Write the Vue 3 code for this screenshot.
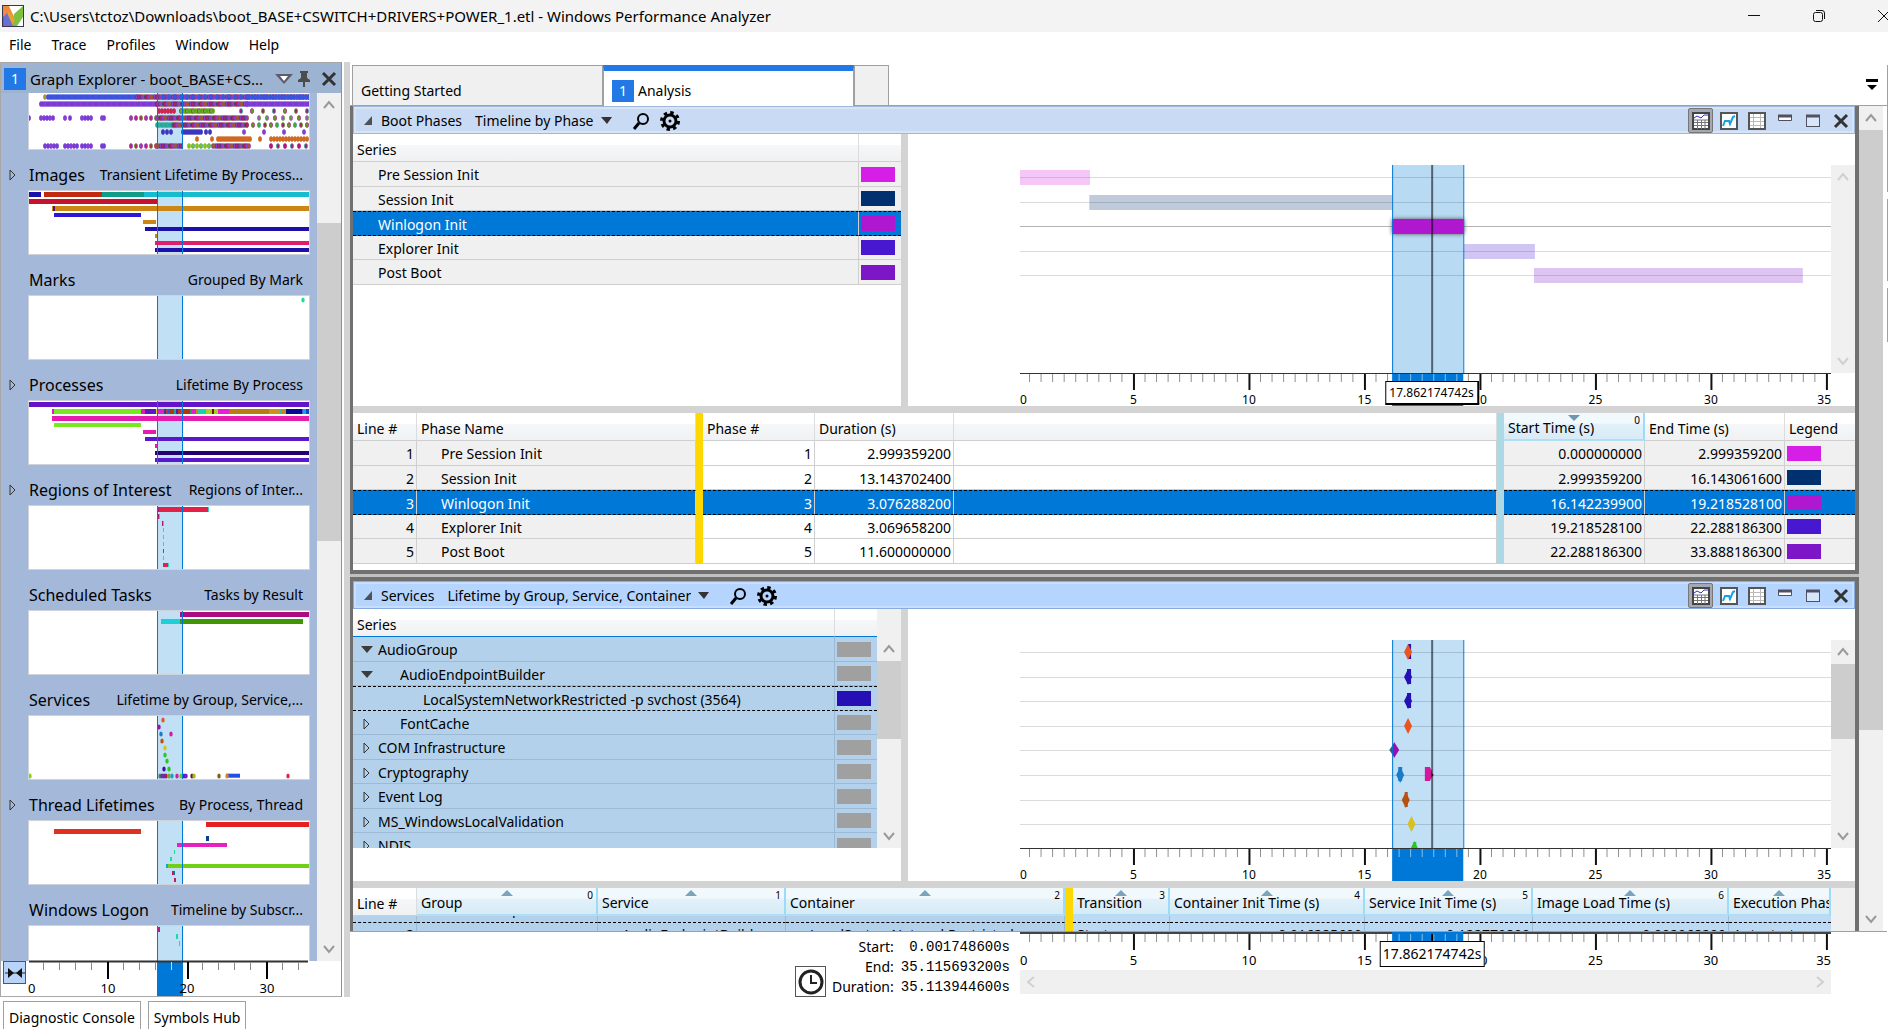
<script setup>
const SPAN = 35.11
const SEL = [16.11, 19.19]
const CURSOR = 17.84
const pct = (t) => (t / SPAN) * 100 + '%'

const ticks = []
for (let i = 1; i <= 70; i++) {
  const t = i / 2
  ticks.push({ x: pct(t - 0.11), major: i % 10 === 0, inside: t > SEL[0] && t < SEL[1] })
}
const labels = [0, 5, 10, 15, 20, 25, 30, 35].map((v) => ({
  v,
  x: v === 0 ? '0%' : v === 35 ? '100%' : pct(v - 0.09),
  anchor: v === 0 ? 'start' : v === 35 ? 'end' : 'middle'
}))

const menu = ['File', 'Trace', 'Profiles', 'Window', 'Help']

const phases = [
  { n: 1, name: 'Pre Session Init', from: 0, to: 3.03, dur: '2.999359200', start: '0.000000000', end: '2.999359200', color: '#d61fe6' },
  { n: 2, name: 'Session Init', from: 3, to: 16.11, dur: '13.143702400', start: '2.999359200', end: '16.143061600', color: '#00306e' },
  { n: 3, name: 'Winlogon Init', from: 16.11, to: 19.22, dur: '3.076288200', start: '16.142239900', end: '19.218528100', color: '#b018d0', sel: true },
  { n: 4, name: 'Explorer Init', from: 19.22, to: 22.29, dur: '3.069658200', start: '19.218528100', end: '22.288186300', color: '#4818d0' },
  { n: 5, name: 'Post Boot', from: 22.25, to: 33.89, dur: '11.600000000', start: '22.288186300', end: '33.888186300', color: '#7d16c6' }
]

const services = [
  { name: 'AudioGroup', level: 0, open: true, color: '#a0a0a0' },
  { name: 'AudioEndpointBuilder', level: 1, open: true, color: '#a0a0a0' },
  { name: 'LocalSystemNetworkRestricted -p svchost (3564)', level: 2, focus: true, leaf: true, color: '#260fb5' },
  { name: 'FontCache', level: 1, color: '#a0a0a0' },
  { name: 'COM Infrastructure', level: 0, color: '#a0a0a0' },
  { name: 'Cryptography', level: 0, color: '#a0a0a0' },
  { name: 'Event Log', level: 0, color: '#a0a0a0' },
  { name: 'MS_WindowsLocalValidation', level: 0, color: '#a0a0a0' },
  { name: 'NDIS', level: 0, color: '#a0a0a0' }
]

const lineY = (i) => 12 + Math.round(i * 24.6)
const diamond = 'M-4 0 L0 -8 L4 0 L0 8 Z'
const marks = [
  { t: 16.8, row: 0, parts: [['M0 -8 h3 v15 h-3 Z', '#260fb5'], [diamond, '#ea5420']] },
  { t: 16.8, row: 1, parts: [[diamond, '#260fb5'], ['M-1 -8 h4 v15 h-4 Z', '#260fb5']] },
  { t: 16.8, row: 2, parts: [[diamond, '#260fb5'], ['M-1 -8 h4 v15 h-4 Z', '#260fb5']] },
  { t: 16.8, row: 3, parts: [[diamond, '#ea5420']] },
  { t: 16.2, row: 4, parts: [['M-5 0 L0 -7 L0 7 Z', '#2c6e78'], ['M-3 0 L0 -8 L5 0 L0 8 L-3 0 Z', '#9412b0']] },
  { t: 16.46, row: 5, parts: [[diamond, '#1a7cc8'], ['M-2 -8 h4 v14 h-4 Z', '#1a7cc8']] },
  { t: 17.7, row: 5, parts: [['M0 -5 L5 0 L0 5 Z', '#7a0f60'], ['M-4 -8 h5 l2 4 v6 l-2 4 h-5 Z', '#d4189c']] },
  { t: 16.7, row: 6, parts: [[diamond, '#b85010'], ['M-1 -8 h3 v15 h-3 Z', '#b85010']] },
  { t: 16.95, row: 7, parts: [[diamond, '#d8c020']] },
  { t: 17.07, row: 8, parts: [[diamond, '#28c820'], ['M-1 -7 h3 v15 h-3 Z', '#28c820']] }
]

const panels = [
  { id: 'phases', title: 'Boot Phases', preset: 'Timeline by Phase', lines: 5 },
  { id: 'services', title: 'Services', preset: 'Lifetime by Group, Service, Container', lines: 8 }
]

const svcCols = [
  { name: 'Group', n: 0 }, { name: 'Service', n: 1 }, { name: 'Container', n: 2 },
  { gold: true },
  { name: 'Transition', n: 3 }, { name: 'Container Init Time (s)', n: 4 }, { name: 'Service Init Time (s)', n: 5 },
  { name: 'Image Load Time (s)', n: 6 }, { name: 'Execution Phase' }
]

// thumbnails: [row, x1, x2, colour] over a 280 unit wide plot
const barY = (r) => 1 + r * 7
const barH = (r) => (r < 3 ? 5 : 4)
const O = '#cc8614', N = '#1c10a8', M = '#e41cb0', V = '#5a18cc', G = '#78e820'
const cyan = '#28d8c0'
const imageBars = [
  [0, 0, 12, N], [0, 15, 73, '#c12a10'], [0, 73, 115, '#0f9d8a'], [0, 115, 280, '#17bdcf'],
  [1, 0, 128, '#c4122f'], [2, 23, 280, O], [2, 24, 26, '#581080'], [3, 25, 112, '#2a18d6'],
  [4, 114, 127, O], [5, 116, 280, N], [6, 126, 128, O], [7, 126, 280, '#e01f6c'], [8, 126, 280, N]
]
const processBars = [
  [0, 0, 280, '#6414c8'],
  [1, 23, 25, M], [1, 25, 112, G], [1, 112, 116, M], [1, 116, 127, V], [1, 127, 128, '#e8d020'], [1, 128, 135, '#e020d0'],
  [1, 135, 137, '#384080'], [1, 137, 139, '#c03040'], [1, 139, 141, '#2060c0'], [1, 141, 145, '#b03810'], [1, 145, 147, '#30a080'],
  [1, 147, 149, '#4028b0'], [1, 149, 152, '#c03020'], [1, 152, 154, '#e020d0'], [1, 154, 161, '#b03810'], [1, 161, 162, '#20a060'],
  [1, 162, 167, '#e020d0'], [1, 167, 169, O], [1, 169, 177, '#18d0b0'], [1, 177, 183, '#a8d018'], [1, 183, 185, '#701010'],
  [1, 185, 189, '#a8d018'], [1, 189, 200, '#e820d0'], [1, 200, 201, '#7070e0'], [1, 201, 240, '#b87c10'], [1, 240, 251, '#d09018'],
  [1, 251, 252, '#30c0b0'], [1, 252, 257, O], [1, 257, 273, '#080898'], [1, 273, 274, '#3858e8'], [1, 274, 277, '#18a0e8'], [1, 277, 280, '#1840d0'],
  [2, 23, 280, M], [3, 25, 112, G], [4, 114, 127, M], [5, 116, 280, V], [6, 126, 128, M], [7, 126, 280, '#240070'], [8, 126, 280, V]
]
const regionBars = [
  [0, 129, 179, '#e42048'], [0, 129, 130, '#b01880'], [0, 179, 180, cyan], [1, 129, 130, '#b01880'], [1, 130, 131, cyan],
  [2, 133, 134, '#b01860'], [2, 134, 135, cyan], [3, 134, 135, cyan], [4, 134, 135, cyan], [5, 134, 135, cyan],
  [6, 134, 135, '#e42048'], [7, 134, 135, cyan], [8, 134, 139, '#e42048'], [8, 139, 140, cyan]
]
const taskBars = [[0, 151, 280, '#a80c80'], [1, 132, 151, '#1cd0d8'], [1, 151, 274, '#409408']]
const threadBars = [
  [0, 177, 280, '#e42020'], [1, 25, 112, '#e03020'], [2, 177, 180, '#084090'], [3, 148, 198, '#e820c0'],
  [4, 145, 146, '#20e090'], [5, 141, 143, '#20e090'], [6, 137, 139, '#18a8c0'], [6, 139, 280, '#70d018'],
  [7, 143, 144, '#c01850'], [7, 144, 146, '#087898'], [8, 145, 147, '#d01850']
]
const logonBars = [[0, 129, 131, '#c01888'], [1, 147, 149, '#20d8b0'], [2, 150, 151, '#20d8b0']]

// dots: [x, y, colour]
const serviceDots = [
  [134, 4, '#ea5420'], [130, 11, '#9412b0'], [132, 18, '#1a7cc8'], [142, 18, '#d4189c'], [133, 25, '#b85010'], [136, 32, '#d8c020'],
  [136, 39, '#28c820'], [138, 45, '#28c820'], [135, 53, '#3810b0'], [140, 53, '#28c820'], [1, 60, '#80d818'],
  [131, 60, '#209080'], [133, 60, '#a01890'], [135, 60, '#3048c0'], [137, 60, '#b01850'], [140, 60, '#70b020'], [143, 60, '#18a0c8'],
  [148, 60, '#d020a0'], [152, 60, '#60d020'], [155, 60, '#3028d0'], [157, 60, '#8018c8'], [163, 60, '#701848'], [165, 60, '#a0c010'],
  [190, 60, '#806010'], [198, 60, '#e08020'], [259, 60, '#e02850']
]
const blends = ['#8a3fd0', '#5a3a90', '#b01878', '#5a8a2c', '#a8286a', '#2a8690', '#6a1a9a', '#a8502a', '#901e3e']
const genericDots = []
function scatter(row, from, to, step, palette) {
  for (let x = from, i = row; x <= to; x += step, i++) {
    genericDots.push({ x, y: 4 + row * 7, fill: palette[(i * i + 3 * i) % palette.length], ring: palette[(i * 5 + 1) % palette.length] })
  }
}
const blue = ['#3a55e0', '#3a55e0', '#4a48d8']
const purple = ['#8a3fd0', '#7a3ad8', '#6048d8']
scatter(0, 16, 17, 3, ['#c0902c']); scatter(0, 19, 108, 2, blue); scatter(0, 108, 280, 2, blends); scatter(0, 134, 220, 6, blue); scatter(0, 220, 280, 3, blue)
scatter(1, 12, 128, 2, purple); scatter(1, 128, 218, 2, blends); scatter(1, 218, 280, 2, purple)
scatter(2, 130, 146, 3, ['#d02848', '#c0208c']); scatter(2, 152, 184, 2, ['#5aa21c', '#6ab020', '#a82060']); scatter(2, 212, 280, 11, ['#5aa21c', '#b0187c', '#2aa69c'])
scatter(3, 0, 0, 1, purple); scatter(3, 12, 26, 3, purple); scatter(3, 36, 42, 5, purple); scatter(3, 53, 64, 3, purple); scatter(3, 73, 76, 2, purple)
scatter(3, 102, 128, 5, ['#8a3fd0', '#b8286a', '#5aa21c']); scatter(3, 128, 218, 2, blends); scatter(3, 230, 280, 8, ['#b04ae0', '#5aa21c', '#b0187c'])
scatter(4, 128, 144, 2, ['#2aa69c', '#38b8a0']); scatter(4, 144, 218, 2, blends); scatter(4, 224, 280, 6, ['#b0187c', '#5aa21c', '#2aa69c'])
scatter(5, 134, 142, 4, ['#3a36c0']); scatter(5, 154, 172, 2, ['#3a36c0']); scatter(5, 177, 182, 4, ['#3a36c0']); scatter(5, 215, 276, 20, ['#8a3fd0'])
scatter(6, 168, 184, 15, ['#d06a20']); scatter(6, 189, 222, 2, ['#d06a20']); scatter(6, 231, 232, 3, ['#d06a20']); scatter(6, 242, 280, 3, ['#d06a20'])
scatter(7, 16, 28, 3, purple); scatter(7, 36, 48, 3, purple); scatter(7, 53, 64, 3, purple); scatter(7, 73, 76, 2, purple)
scatter(7, 102, 128, 5, ['#8a3fd0', '#b8286a', '#5aa21c']); scatter(7, 128, 152, 2, blends); scatter(7, 160, 180, 4, ['#8bbf1c', '#2aa69c']); scatter(7, 184, 220, 2, blends); scatter(7, 242, 280, 7, ['#b0187c', '#2aa69c'])

const graphs = [
  { name: 'Images', preset: 'Transient Lifetime By Process...', tree: true, bars: imageBars },
  { name: 'Marks', preset: 'Grouped By Mark', dots: [[274, 4, '#20e090']] },
  { name: 'Processes', preset: 'Lifetime By Process', tree: true, bars: processBars },
  { name: 'Regions of Interest', preset: 'Regions of Inter...', tree: true, bars: regionBars },
  { name: 'Scheduled Tasks', preset: 'Tasks by Result', bars: taskBars },
  { name: 'Services', preset: 'Lifetime by Group, Service,...', bars: [[8.1, 197, 211, '#2050e8']], dots: serviceDots },
  { name: 'Thread Lifetimes', preset: 'By Process, Thread', tree: true, bars: threadBars },
  { name: 'Windows Logon', preset: 'Timeline by Subscr...', bars: logonBars }
]
const smallTicks = []
for (let i = 1; i <= 17; i++) smallTicks.push({ x: Math.round(i * 15.95) - 1, major: i % 5 === 0 })
</script>

<template>
  <div class="window">
    <header class="titlebar">
      <svg class="logo" width="22" height="22" viewBox="0 0 22 22">
        <rect x="0.5" y="0.5" width="21" height="21" fill="#fff" stroke="#3c3450" />
        <path d="M1 1h6l5 11-5 9H1z" fill="#f08a3c" />
        <path d="M1 12l4-3 6 12H1z" fill="#5a64c8" />
        <path d="M12 9l9-8v11l-6 9h-5z" fill="#7cc040" />
        <path d="M7 6l6 9-3 6-5-9z" fill="#e8a030" />
        <path d="M2 12l3-4 6 13H2z" fill="#6a70d0" />
      </svg>
      <span class="caption">C:\Users\tctoz\Downloads\boot_BASE+CSWITCH+DRIVERS+POWER_1.etl - Windows Performance Analyzer</span>
      <div class="winbtns">
        <button aria-label="Minimize"><svg width="12" height="12"><path d="M0 5.500h12" stroke="#111" /></svg></button>
        <button aria-label="Restore"><svg width="12" height="12" fill="none" stroke="#111"><rect x="0.5" y="2.5" width="9" height="9" rx="2" /><path d="M3 .5h6q2.500 0 2.500 2.500v6" /></svg></button>
        <button aria-label="Close"><svg width="12" height="12"><path d="M0 0l12 12M12 0L0 12" stroke="#111" /></svg></button>
      </div>
    </header>

    <nav class="menubar">
      <button v-for="m in menu" :key="m">{{ m }}</button>
    </nav>

    <div class="body">
      <aside class="explorer">
        <div class="ex-head">
          <span class="badge">1</span>
          <span class="ex-title">Graph Explorer - boot_BASE+CS...</span>
          <button aria-label="Menu"><svg width="18" height="12"><path d="M0 1h18l-9 10z" fill="#5c5c6c" /><path d="M5 3h8l-4 5z" fill="#fff" /></svg></button>
          <button aria-label="Pin"><svg width="14" height="18" fill="#4c4c4c"><path d="M3 1h8v2h-1v5l3 2v2H8v5H6v-5H1v-2l3-2V3H3z" /></svg></button>
          <button class="x" aria-label="Close"><svg width="16" height="16"><path d="M2 2l12 12M14 2L2 14" stroke="#333" stroke-width="3" /></svg></button>
        </div>
        <div class="ex-main">
          <div class="ex-list">
            <div class="thumb first">
              <svg width="280" height="56">
                <rect x="128" y="0" width="26" height="56" class="band" />
                <ellipse v-for="(d, i) in genericDots" :key="i" :cx="d.x" :cy="d.y" rx="1.600" ry="2.500" :fill="d.fill" :stroke="d.ring" stroke-opacity="0.700" />
                <path d="M128.500 0v56M153.500 0v56" class="edge" />
              </svg>
            </div>
            <section v-for="g in graphs" :key="g.name" class="graph">
              <div class="graph-head">
                <span class="tri"><svg v-if="g.tree" width="8" height="12"><path d="M1 1l5 5-5 5z" fill="none" stroke="#333" /></svg></span>
                <span class="gname">{{ g.name }}</span>
                <span class="gpreset">{{ g.preset }}</span>
              </div>
              <div class="thumb">
                <svg width="280" height="63">
                  <rect x="128" y="0" width="26" height="63" class="band" />
                  <rect v-for="(b, i) in g.bars || []" :key="'b' + i" :x="b[1]" :y="barY(b[0])" :width="b[2] - b[1]" :height="barH(b[0])" :fill="b[3]" />
                  <ellipse v-for="(d, i) in g.dots || []" :key="'d' + i" :cx="d[0]" :cy="d[1]" rx="1.700" ry="2.500" :fill="d[2]" />
                  <path d="M128.500 0v63M153.500 0v63" class="edge" />
                </svg>
              </div>
            </section>
          </div>
          <div class="sb ex-sb">
            <button aria-label="Scroll up"><svg width="14" height="10"><path d="M2 8l5-6 5 6" class="chev" /></svg></button>
            <div class="sb-thumb"></div>
            <button aria-label="Scroll down"><svg width="14" height="10"><path d="M2 2l5 6 5-6" class="chev" /></svg></button>
          </div>
        </div>
        <div class="ex-axis">
          <button class="fit" aria-label="Fit"><svg width="20" height="14"><path d="M0 7h20" stroke="#222" /><path d="M3 2l6 5-6 5zM17 2l-6 5 6 5z" fill="#111" /></svg></button>
          <svg width="313" height="35" class="ex-ruler">
            <rect x="129" y="0" width="26" height="35" fill="#0078d7" />
            <path d="M1 0.500H280" stroke="#333" stroke-width="2" />
            <rect v-for="t in smallTicks" :key="t.x" :x="t.x" y="1" :width="t.major ? 2 : 1" :height="t.major ? 17 : 8" :fill="t.major ? '#000' : t.x > 129 && t.x < 155 ? '#b8dcf8' : '#888'" />
            <text x="0" y="32">0</text>
            <text x="80" y="32" text-anchor="middle">10</text>
            <text x="159" y="32" text-anchor="middle">20</text>
            <text x="239" y="32" text-anchor="middle">30</text>
          </svg>
        </div>
      </aside>

      <main class="main">
        <div class="tabs">
          <button class="tab">Getting Started</button>
          <button class="tab active"><span class="badge">1</span>Analysis</button>
          <button class="tab stub" aria-label="New tab"></button>
          <button class="overflow" aria-label="Tab list"><svg width="12" height="12"><path d="M0 1.500h12" stroke="#000" stroke-width="3" /><path d="M1 6h10l-5 5z" /></svg></button>
        </div>

        <div class="work">
          <div class="panels">
            <section v-for="p in panels" :key="p.id" class="panel" :class="p.id">
              <div class="p-head">
                <svg class="fold" width="8" height="10"><path d="M8 0v9H0z" fill="#505058" /></svg>
                <span>{{ p.title }}</span>
                <label class="preset">
                  <select :aria-label="p.title + ' preset'"><option>{{ p.preset }}</option></select>
                  <svg width="11" height="7"><path d="M0 0h11l-5 7z" fill="#333" /></svg>
                </label>
                <button class="find" aria-label="Find"><svg width="18" height="18" fill="none" stroke="#000"><circle cx="11" cy="7" r="5" stroke-width="2" /><path d="M7 11l-5 6" stroke-width="3" /></svg></button>
                <button class="gear" aria-label="Settings"><svg width="22" height="22" viewBox="-11 -11 22 22" fill="none" stroke="#000"><circle r="6" stroke-width="3" /><circle r="8.500" stroke-width="3" stroke-dasharray="3.400 3.275" /><circle r="1.500" fill="#000" stroke="none" /></svg></button>
                <div class="p-tools">
                  <button class="on" aria-label="Graph and table"><svg width="18" height="18"><rect x="1" y="1" width="16" height="16" fill="#fff" stroke="#444" stroke-width="2" /><path d="M2 10.500h14M2 13.500h14M5.500 8v9M9.500 8v9M13 8v9M2 8h14" stroke="#777" /><path d="M2 6l3-2 4 2 3-3h4" stroke="#3030c8" fill="none" /></svg></button>
                  <button aria-label="Graph"><svg width="18" height="18"><rect x="1" y="1" width="16" height="16" fill="#fff" stroke="#555" stroke-width="2" /><path d="M3 14l2-5h4l1 3 3-7 2-1" stroke="#18a0e0" stroke-width="2" fill="none" /></svg></button>
                  <button aria-label="Table"><svg width="18" height="18"><rect x="1" y="1" width="16" height="16" fill="#fff" stroke="#555" stroke-width="2" /><path d="M2 5.500h14M2 9.500h14M2 13.500h14M5.500 2v14M12.500 2v14" stroke="#bbb" /></svg></button>
                  <button aria-label="Minimize"><svg width="18" height="18"><path d="M2.500 3.500h13v5h-13z" fill="#fff" stroke="#505060" /><path d="M2 4h14" stroke="#505060" stroke-width="3" /></svg></button>
                  <button aria-label="Maximize"><svg width="18" height="18"><rect x="2.500" y="3.500" width="13" height="11" fill="#d8e6fa" stroke="#505060" /><path d="M2 4h14" stroke="#505060" stroke-width="3" /></svg></button>
                  <button aria-label="Close"><svg width="18" height="18"><path d="M3 3l12 12M15 3L3 15" stroke="#333" stroke-width="3" /></svg></button>
                </div>
              </div>

              <div class="p-body">
                <div class="series">
                  <table v-if="p.id === 'phases'" class="grid">
                    <colgroup><col /><col class="c-sw" /></colgroup>
                    <thead><tr><th>Series</th><th></th></tr></thead>
                    <tbody>
                      <tr v-for="r in phases" :key="r.n" :class="{ sel: r.sel }">
                        <td class="name">{{ r.name }}</td>
                        <td class="sw"><i :style="{ background: r.color }"></i></td>
                      </tr>
                    </tbody>
                  </table>
                  <template v-else>
                    <div class="clip">
                      <table class="grid tinted">
                        <colgroup><col /><col class="c-sw" /></colgroup>
                        <thead><tr><th>Series</th><th></th></tr></thead>
                        <tbody>
                          <tr v-for="r in services" :key="r.name" :class="{ focus: r.focus }">
                            <td class="tree">
                              <div>
                                <span class="tw">
                                  <svg v-if="r.open" width="12" height="12"><path d="M0 2h12l-6 7z" fill="#3c3c3c" /></svg>
                                  <svg v-else-if="!r.leaf" width="12" height="12"><path d="M3 1l5 5-5 5z" fill="none" stroke="#333" /></svg>
                                </span>
                                <span :class="'lv' + r.level">{{ r.name }}</span>
                              </div>
                            </td>
                            <td class="sw"><i :style="{ background: r.color }"></i></td>
                          </tr>
                        </tbody>
                      </table>
                    </div>
                    <div class="sb series-sb">
                      <button aria-label="Scroll up"><svg width="14" height="10"><path d="M2 8l5-6 5 6" class="chev" /></svg></button>
                      <div class="sb-thumb"></div>
                      <button aria-label="Scroll down"><svg width="14" height="10"><path d="M2 2l5 6 5-6" class="chev" /></svg></button>
                    </div>
                  </template>
                </div>
                <div class="vsplit"></div>
                <div class="chart">
                  <div class="plot">
                    <svg width="100%" height="241">
                      <rect :x="pct(SEL[0])" y="0" :width="pct(SEL[1] - SEL[0])" height="208" :fill="p.id === 'phases' ? '#b8daf3' : '#c1dff5'" />
                      <rect v-for="i in p.lines" :key="i" x="0" :y="lineY(i - 1)" width="100%" height="1" :fill="p.id === 'phases' && i === 3 ? '#b4b4b4' : '#000'" :fill-opacity="p.id === 'phases' && i === 3 ? 1 : 0.140" />
                      <template v-if="p.id === 'phases'">
                        <rect v-for="(r, i) in phases" :key="r.n" :class="{ glow: r.sel }" :x="pct(r.from)" :y="lineY(i) - 7" :width="pct(r.to - r.from)" height="15" :fill="r.color" :fill-opacity="r.sel ? 1 : 0.250" />
                      </template>
                      <svg v-else width="100%" height="208">
                        <svg v-for="(m, i) in marks" :key="i" :x="pct(m.t)" :y="lineY(m.row)" class="ov">
                          <path v-for="(q, k) in m.parts" :key="k" :d="q[0]" :fill="q[1]" />
                        </svg>
                      </svg>
                      <rect :x="pct(SEL[0])" y="0" width="1" height="208" fill="#0078d7" />
                      <rect :x="pct(SEL[1])" y="0" width="1" height="208" fill="#0078d7" />
                      <rect :x="pct(CURSOR - 0.04)" y="0" width="2" height="208" fill="#000" fill-opacity="0.550" />
                      <rect x="0" y="208" width="100%" height="1" fill="#333" />
                      <rect :x="pct(SEL[0])" y="209" :width="pct(SEL[1] - SEL[0])" height="32" fill="#0078d7" />
                      <rect v-for="t in ticks" :key="t.x" :x="t.x" y="209" :width="t.major ? 2 : 1" :height="t.major ? 16 : 8" :fill="t.major ? '#111' : t.inside ? '#80c0f0' : '#909090'" />
                      <text v-for="l in labels" :key="l.v" :x="l.x" y="239" :text-anchor="l.anchor">{{ l.v }}</text>
                    </svg>
                    <div v-if="p.id === 'phases'" class="tip" :style="{ left: pct(CURSOR) }">17.862174742s</div>
                  </div>
                  <div class="sb chart-sb">
                    <button aria-label="Scroll up"><svg width="14" height="10"><path d="M2 8l5-6 5 6" class="chev" /></svg></button>
                    <div v-if="p.id === 'services'" class="sb-thumb"></div>
                    <button aria-label="Scroll down"><svg width="14" height="10"><path d="M2 2l5 6 5-6" class="chev" /></svg></button>
                  </div>
                </div>
              </div>
              <div class="hsplit"></div>

              <div v-if="p.id === 'phases'" class="t-wrap">
                <table class="grid data">
                  <colgroup>
                    <col class="w64" /><col class="w279" /><col class="w7" /><col class="w112" /><col class="w139" /><col />
                    <col class="w7" /><col class="w141" /><col class="w140" /><col class="w70" />
                  </colgroup>
                  <thead>
                    <tr>
                      <th>Line #</th><th>Phase Name</th><th class="gold"></th><th>Phase #</th><th>Duration (s)</th><th></th><th class="ice"></th>
                      <th class="sorted">Start Time (s)<svg class="arrow" width="12" height="7"><path d="M0 0h12l-6 6z" fill="#6a98b4" /></svg><sup>0</sup></th>
                      <th>End Time (s)</th><th>Legend</th>
                    </tr>
                  </thead>
                  <tbody>
                    <tr v-for="r in phases" :key="r.n" :class="{ sel: r.sel }">
                      <td class="num g">{{ r.n }}</td><td class="g ind">{{ r.name }}</td><td class="gold"></td><td class="num">{{ r.n }}</td>
                      <td class="num">{{ r.dur }}</td><td></td><td class="ice"></td><td class="num g">{{ r.start }}</td><td class="num g">{{ r.end }}</td>
                      <td class="sw g"><i :style="{ background: r.color }"></i></td>
                    </tr>
                  </tbody>
                </table>
              </div>
              <div v-else class="t-wrap svc">
                <table class="grid data">
                  <colgroup>
                    <col class="w64" /><col class="w181" /><col class="w188" /><col class="w279" /><col class="w8" /><col class="w97" />
                    <col class="w195" /><col class="w168" /><col class="w196" /><col />
                  </colgroup>
                  <thead>
                    <tr>
                      <th>Line #</th>
                      <th v-for="(c, i) in svcCols" :key="i" :class="c.gold ? 'gold' : 'sorted'">
                        {{ c.name }}<svg v-if="!c.gold" class="arrow" width="12" height="7"><path d="M0 6h12l-6-6z" fill="#7aa4bc" /></svg><sup v-if="c.n !== undefined">{{ c.n }}</sup>
                      </th>
                    </tr>
                  </thead>
                  <tbody>
                    <tr class="cut">
                      <td></td><td class="ind"><div>AudioGroup</div></td><td></td><td></td><td class="gold"></td><td class="lt"></td><td class="lt"></td><td class="lt"></td><td class="lt"></td><td class="lt"></td>
                    </tr>
                    <tr class="next">
                      <td class="num">2</td><td></td><td class="ind">AudioEndpointBuilder</td><td class="ind">LocalSystemNetworkRestricted</td><td class="gold"></td>
                      <td class="lt">Start</td><td class="num lt">0.016285600</td><td class="num lt">0.122770800</td><td class="num lt">0.002068200</td><td class="lt">Autostart</td>
                    </tr>
                  </tbody>
                </table>
                <div class="sb"><button aria-label="Scroll up" class="low"><svg width="14" height="10"><path d="M2 8l5-6 5 6" class="chev" /></svg></button></div>
              </div>
            </section>
          </div>
          <div class="sb work-sb">
            <button aria-label="Scroll up"><svg width="14" height="10"><path d="M2 8l5-6 5 6" class="chev" /></svg></button>
            <div class="sb-thumb"></div>
            <button aria-label="Scroll down"><svg width="14" height="10"><path d="M2 2l5 6 5-6" class="chev" /></svg></button>
          </div>
        </div>

        <div class="timeline">
          <div class="range">
            <button class="clock" aria-label="Time range"><svg width="26" height="26" viewBox="-13 -13 26 26" fill="none" stroke="#222"><circle r="11" stroke-width="3" /><path d="M0 -7v8h6" stroke-width="2" /></svg></button>
            <dl>
              <dt>Start:</dt><dd>0.001748600s</dd>
              <dt>End:</dt><dd>35.115693200s</dd>
              <dt>Duration:</dt><dd>35.113944600s</dd>
            </dl>
          </div>
          <div class="ruler">
            <svg width="100%" height="38">
              <rect x="0" y="0" width="100%" height="2" fill="#444" />
              <rect :x="pct(SEL[0])" y="0" :width="pct(SEL[1] - SEL[0])" height="34" fill="#0078d7" />
              <rect v-for="t in ticks" :key="t.x" :x="t.x" y="2" :width="t.major ? 2 : 1" :height="t.major ? 16 : 8" :fill="t.major ? '#111' : t.inside ? '#80c0f0' : '#909090'" />
              <rect :x="pct(CURSOR - 0.04)" y="2" width="2" height="8" />
              <text v-for="l in labels" :key="l.v" :x="l.x" y="33" :text-anchor="l.anchor" class="big">{{ l.v }}</text>
            </svg>
            <div class="tip big" :style="{ left: pct(CURSOR) }">17.862174742s</div>
            <div class="hbar">
              <button aria-label="Scroll left"><svg width="10" height="14"><path d="M8 2L2 7l6 5" class="chev faint" /></svg></button>
              <button aria-label="Scroll right"><svg width="10" height="14"><path d="M2 2l6 5-6 5" class="chev faint" /></svg></button>
            </div>
          </div>
        </div>
      </main>
      <div class="dock"><span></span><span></span><span></span></div>
    </div>

    <footer class="bottom">
      <button>Diagnostic Console</button>
      <button>Symbols Hub</button>
    </footer>
  </div>
</template>

<style>
body { background: #fff; overflow: hidden; }
</style>

<style scoped>
.window { display: flex; flex-direction: column; height: 100vh; overflow: hidden; font-family: "Noto Sans", "Open Sans", sans-serif; font-size: 14px; line-height: 20px; color: #000; }
button { border: 0; padding: 0; margin: 0; background: none; font: inherit; color: inherit; display: flex; align-items: center; justify-content: center; white-space: nowrap; }
svg { display: block; flex: none; overflow: visible; }
text { font-size: 12px; }
text.big { font-size: 13px; }
.titlebar { display: flex; align-items: center; height: 32px; flex: none; background: #f3f3f3; padding-left: 2px; gap: 6px; }
.caption { font-size: 15px; white-space: nowrap; }
.winbtns { display: flex; margin-left: auto; margin-right: -2px; gap: 53px; }
.menubar { display: flex; height: 30px; flex: none; padding: 0 9px 4px; gap: 20px; box-sizing: border-box; }
.body { flex: 1; display: flex; min-height: 0; }
.badge { background: #2279e5; color: #fff; width: 22px; height: 22px; line-height: 22px; text-align: center; flex: none; font-size: 14px; }

.explorer { width: 342px; flex: none; box-sizing: border-box; border: 1px solid #a8a8a8; border-right-color: #909090; display: flex; flex-direction: column; background: #a4b8da; }
.ex-head { height: 30px; flex: none; display: flex; align-items: center; background: #9cb4d2; padding: 2px 4px 0 3px; gap: 4px; box-sizing: border-box; }
.ex-title { flex: 1; white-space: nowrap; font-size: 15px; }
.ex-head .x { margin-left: 6px; }
.ex-main { flex: 1; display: flex; min-height: 0; }
.ex-list { flex: 1; overflow: hidden; }
.thumb { width: 280px; margin-left: 27px; border: 1px solid #cfd2d8; background: #fff; }
.thumb svg { overflow: hidden; }
.thumb.first { border-top: 0; }
.band { fill: #c1dff5; }
.edge { stroke: #0078d7; fill: none; }
.graph-head { height: 40px; box-sizing: border-box; padding: 10px 14px 0 8px; display: flex; align-items: center; }
.tri { width: 20px; }
.gname { font-size: 16px; flex: 1; white-space: nowrap; }
.gpreset { white-space: nowrap; }
.sb { width: 24px; flex: none; background: #f0f0f0; display: flex; flex-direction: column; }
.sb button { height: 24px; flex: none; }
.sb button:last-child { margin-top: auto; }
.sb-thumb { background: #cdcdcd; }
.chev { fill: none; stroke: #9a9a9a; stroke-width: 2; }
.chev.faint { stroke: #d0d0d0; }
.ex-sb .sb-thumb { margin-top: 106px; height: 318px; }
.ex-axis { height: 35px; flex: none; background: #fff; display: flex; }
.fit { width: 23px; height: 23px; box-sizing: border-box; border: 1px solid #555; background: #b8d4fa; margin: 0 2px 0 2px; }
.ex-ruler text { font-size: 13px; }

.main { flex: 1; min-width: 0; display: flex; flex-direction: column; border-left: 6px solid #d3d3d3; margin-left: 2px; }
.tabs { height: 44px; flex: none; display: flex; align-items: flex-end; border-bottom: 1px solid #a0a0a0; box-sizing: border-box; padding: 3px 0 0 2px; position: relative; }
.tab { width: 251px; height: 40px; box-sizing: border-box; border: 1px solid #a0a0a0; border-bottom: 0; background: #f0f0f0; justify-content: flex-start; padding: 10px 8px 0; }
.tab.active { height: 41px; margin-bottom: -1px; background: #fff; border-top: 6px solid #2279e5; padding-top: 5px; gap: 4px; }
.tab.stub { width: 35px; }
.overflow { margin: 0 9px 14px auto; }
.work { flex: 1; display: flex; min-height: 0; border-bottom: 1px solid #a0a0a0; }
.panels { flex: 1; min-width: 0; overflow: hidden; display: flex; flex-direction: column; background: #c0c0c0; gap: 3px; }
.panel { border: solid #707070; border-width: 0 4px 4px 3px; background: #fff; flex: none; }
.panel.services { border-top-width: 4px; }
.p-head { height: 28px; box-sizing: border-box; border: 1px solid #a0b8dc; background: #c9dbf4; box-shadow: inset 0 0 0 2px #d6e4f6; display: flex; align-items: center; padding: 1px 4px 0 10px; }
.services .p-head { background: #b5d5ff; border-color: #88acdf; box-shadow: inset 0 0 0 2px #c6deff; }
.fold { margin-right: 9px; }
.preset { display: flex; align-items: center; gap: 7px; margin-left: 13px; }
.preset select { appearance: none; border: 0; padding: 0; background: none; font: inherit; color: inherit; }
.find { margin-left: 20px; }
.gear { margin-left: 9px; }
.p-tools { margin-left: auto; display: flex; align-items: center; gap: 10px; }
.p-tools .on { width: 25px; height: 25px; box-sizing: border-box; border: 1px solid #777; border-radius: 2px; background: #a4a8b2; margin-right: -3px; }
.p-body { display: flex; height: 272px; }
.series { width: 548px; flex: none; display: flex; align-items: flex-start; }
.vsplit { width: 7px; background: #d3d3d3; flex: none; }
.hsplit { height: 7px; background: #d3d3d3; }
.clip { flex: 1; height: 239px; overflow: hidden; }
.series-sb { height: 239px; }
.series-sb .sb-thumb { height: 78px; }
.series-sb button:first-child { margin-top: 28px; }

.grid { width: 100%; border-collapse: separate; border-spacing: 0; table-layout: fixed; }
.c-sw { width: 42px; }
.grid th { height: 28px; box-sizing: border-box; padding: 4px 4px 0; text-align: left; font-weight: 400; white-space: nowrap; background: linear-gradient(#fff 40%, #f6f7f8 41%, #f0f1f3); border-right: 1px solid #dcdcdc; border-bottom: 1px solid #cfcfcf; position: relative; overflow: hidden; }
.grid td { height: 25px; box-sizing: border-box; padding: 2px 4px 0; line-height: 20px; white-space: nowrap; border-right: 1px solid #cfcfcf; border-bottom: 1px solid #cfcfcf; overflow: hidden; }
.grid tr:nth-child(even) td { height: 24px; }
.grid td:last-child, .grid th:last-child { border-right: 0; }
.grid td.name, .grid td.name + td { background: #f0f0f0; }
.grid td.name { padding-left: 25px; }
.grid td.sw { padding: 0 0 0 2px; }
.sw i { display: block; width: 34px; height: 15px; }
.grid tr.sel td { background: #0078d7; color: #fff; border-top: 1px dashed #000; border-bottom: 1px dashed #000; }
.tinted th { border-bottom-color: #0078d7; }
.grid.tinted td { background: #b3d1ea; border-color: #9dbad4; }
.grid.tinted tr.focus td { border-top: 1px dashed #000; border-bottom: 1px dashed #000; }
.tree div { display: flex; align-items: center; }
.tw { width: 17px; padding-left: 4px; }
.lv1 { padding-left: 22px; }
.lv2 { padding-left: 45px; }

.chart { flex: 1; min-width: 0; display: flex; padding: 31px 0 0 112px; }
.plot { flex: 1; min-width: 0; position: relative; }
.plot > svg > svg { overflow: hidden; }
.plot > svg > svg > .ov { overflow: visible; }
.glow { filter: drop-shadow(0 0 2px #555); }
.chart-sb { height: 208px; }
.chart-sb .sb-thumb { height: 75px; }
.phases .chart-sb .chev { stroke: #d0d0d0; }
.tip { position: absolute; top: 216px; transform: translateX(-50%); background: #fff; border: 1px solid #000; border-width: 1px 2px 2px 1px; padding: 0 3px; font-size: 12px; line-height: 21px; white-space: nowrap; }

.t-wrap { height: 157px; }
.w64 { width: 64px; } .w279 { width: 279px; } .w7 { width: 7px; } .w8 { width: 8px; } .w112 { width: 112px; } .w139 { width: 139px; }
.w141 { width: 141px; } .w140 { width: 140px; } .w70 { width: 70px; } .w181 { width: 181px; } .w188 { width: 188px; } .w97 { width: 97px; }
.w195 { width: 195px; } .w168 { width: 168px; } .w196 { width: 196px; }
.data td.num { text-align: right; padding-right: 2px; }
.data td.g { background: #f0f0f0; }
.grid .ind { padding-left: 24px; }
.grid tr .gold, .grid tr.sel .gold { background: #ffd700; border: 0; padding: 0; }
.grid tr .ice, .grid tr.sel .ice { background: #add8e6; border: 0; padding: 0; }
.grid th.sorted { background: linear-gradient(#f2f9fd 40%, #e2f1fa 41%, #d6ebf6); border-right: 2px solid #9cdcf8; border-bottom: 2px solid #b0def4; }
.arrow { position: absolute; top: 2px; left: 50%; margin-left: -6px; }
sup { position: absolute; top: 0; right: 3px; font-size: 10px; line-height: 14px; }
.svc { display: flex; }
.svc .grid { width: calc(100% - 24px); flex: none; align-self: flex-start; }
.svc .grid td { background: #b3d1ea; border-color: #9dbad4; }
.svc .grid td.lt { background: #bddaf4; }
.svc .grid tr.cut td { height: 7px; border-bottom: 1px dashed #000; padding-top: 0; padding-bottom: 0; line-height: 0; }
.svc .grid tr td.gold { background: #ffd700; border: 0; }
.svc .grid tr.next td { padding-top: 1px; }
.cut div { height: 6px; overflow: hidden; display: flex; align-items: flex-end; line-height: 26px; }
.svc .low { margin: 26px 0 0; }

.work-sb { margin-right: 4px; }
.work-sb .sb-thumb { height: 600px; }
.timeline { height: 65px; flex: none; display: flex; padding-right: 56px; }
.range { width: 670px; flex: none; display: flex; justify-content: flex-end; align-items: flex-end; gap: 6px; box-sizing: border-box; padding-right: 10px; }
.clock { width: 31px; height: 31px; box-sizing: border-box; border: 1px solid #555; }
dl { margin: 0; display: grid; grid-template-columns: auto auto; column-gap: 7px; text-align: right; }
dt { line-height: 20px; }
dd { margin: 0; font-family: "Liberation Mono", monospace; line-height: 20px; }
.ruler { flex: 1; min-width: 0; position: relative; }
.tip.big { top: 9px; font-size: 14px; line-height: 24px; padding: 0 2px; border-width: 1px; }
.hbar { height: 24px; background: #f0f0f0; display: flex; justify-content: space-between; padding: 0 6px; }
.dock { width: 1px; flex: none; display: flex; flex-direction: column; gap: 7px; padding-top: 3px; }
.dock span { background: #a0a0a0; height: 54px; }
.dock span:first-child { height: 127px; }
.dock span:nth-child(2) { height: 82px; }
.bottom { height: 32px; flex: none; box-sizing: border-box; padding: 4px 3px 0; display: flex; gap: 7px; }
.bottom button { border: 1px solid #a0a0a0; border-bottom: 0; padding: 4px 5px 0; height: 28px; box-sizing: border-box; }
</style>
